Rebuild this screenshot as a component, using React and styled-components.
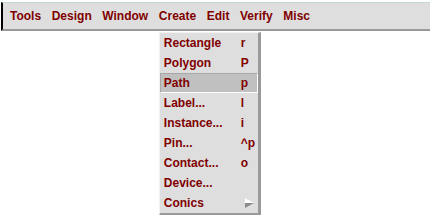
import React from "react";
import styled, { createGlobalStyle } from "styled-components";

const GlobalStyle = createGlobalStyle`
  html, body {
    margin: 0;
    padding: 0;
    background: #ffffff;
  }
  body {
    font-family: "Liberation Sans", Arial, sans-serif;
  }
`;

const Page = styled.div`
  width: 430px;
  height: 215px;
  padding-top: 2px;
  box-sizing: border-box;
  overflow: hidden;
`;

const MenuBar = styled.div`
  display: flex;
  align-items: center;
  gap: 10.6px;
  height: 26px;
  margin-left: 1px;
  padding-left: 7px;
  background: #dedede;
  border-top: 1px solid #c4d6d6;
  border-left: 2px solid #000;
  border-bottom: 2px solid #9a9a9a;
`;

const MenuTitle = styled.div`
  position: relative;
  height: 26px;
  line-height: 26px;
  font-size: 12px;
  font-weight: bold;
  color: #800000;
  white-space: nowrap;
`;

const Dropdown = styled.div`
  position: absolute;
  top: 29px;
  left: 0;
  width: 98px;
  line-height: normal;
  background: #dedede;
  border-top: 1px solid #f2f2f2;
  border-left: 1px solid #f2f2f2;
  border-right: 3px solid #9a9a9a;
  border-bottom: 3px solid #9a9a9a;
  z-index: 2;
`;

const Item = styled.div`
  display: grid;
  grid-template-columns: 77px 1fr;
  align-items: center;
  height: 20px;
  box-sizing: border-box;
  padding-left: 3px;
  font-size: 12px;
  font-weight: bold;
  color: #800000;
  background: ${(p) => (p.$active ? "#c0c0c0" : "transparent")};
  border: 1px solid transparent;
  border-color: ${(p) =>
    p.$active ? "#a8a8a8 #ffffff #ffffff #a8a8a8" : "transparent"};
`;

const Shortcut = styled.span`
  display: flex;
  align-items: center;
  padding-left: ${(p) => (p.$sub ? "4px" : "0")};
`;

function SubArrow() {
  return (
    <svg width="10" height="11" viewBox="0 0 10 11">
      <polygon points="0,0 9,5 0,5" fill="#ffffff" />
      <polygon points="0,5 9,5 0,10" fill="#8c8c8c" />
    </svg>
  );
}

const TITLES = ["Tools", "Design", "Window", "Create", "Edit", "Verify", "Misc"];

const ITEMS = [
  { label: "Rectangle", key: "r" },
  { label: "Polygon", key: "P" },
  { label: "Path", key: "p", active: true },
  { label: "Label...", key: "l" },
  { label: "Instance...", key: "i" },
  { label: "Pin...", key: "^p" },
  { label: "Contact...", key: "o" },
  { label: "Device...", key: "" },
  { label: "Conics", sub: true },
];

export default function App() {
  return (
    <Page>
      <GlobalStyle />
      <MenuBar>
        {TITLES.map((t) => (
          <MenuTitle key={t}>
            {t}
            {t === "Create" && (
              <Dropdown>
                {ITEMS.map((it) => (
                  <Item key={it.label} $active={it.active}>
                    <span>{it.label}</span>
                    <Shortcut $sub={it.sub}>
                      {it.sub ? <SubArrow /> : it.key}
                    </Shortcut>
                  </Item>
                ))}
              </Dropdown>
            )}
          </MenuTitle>
        ))}
      </MenuBar>
    </Page>
  );
}
